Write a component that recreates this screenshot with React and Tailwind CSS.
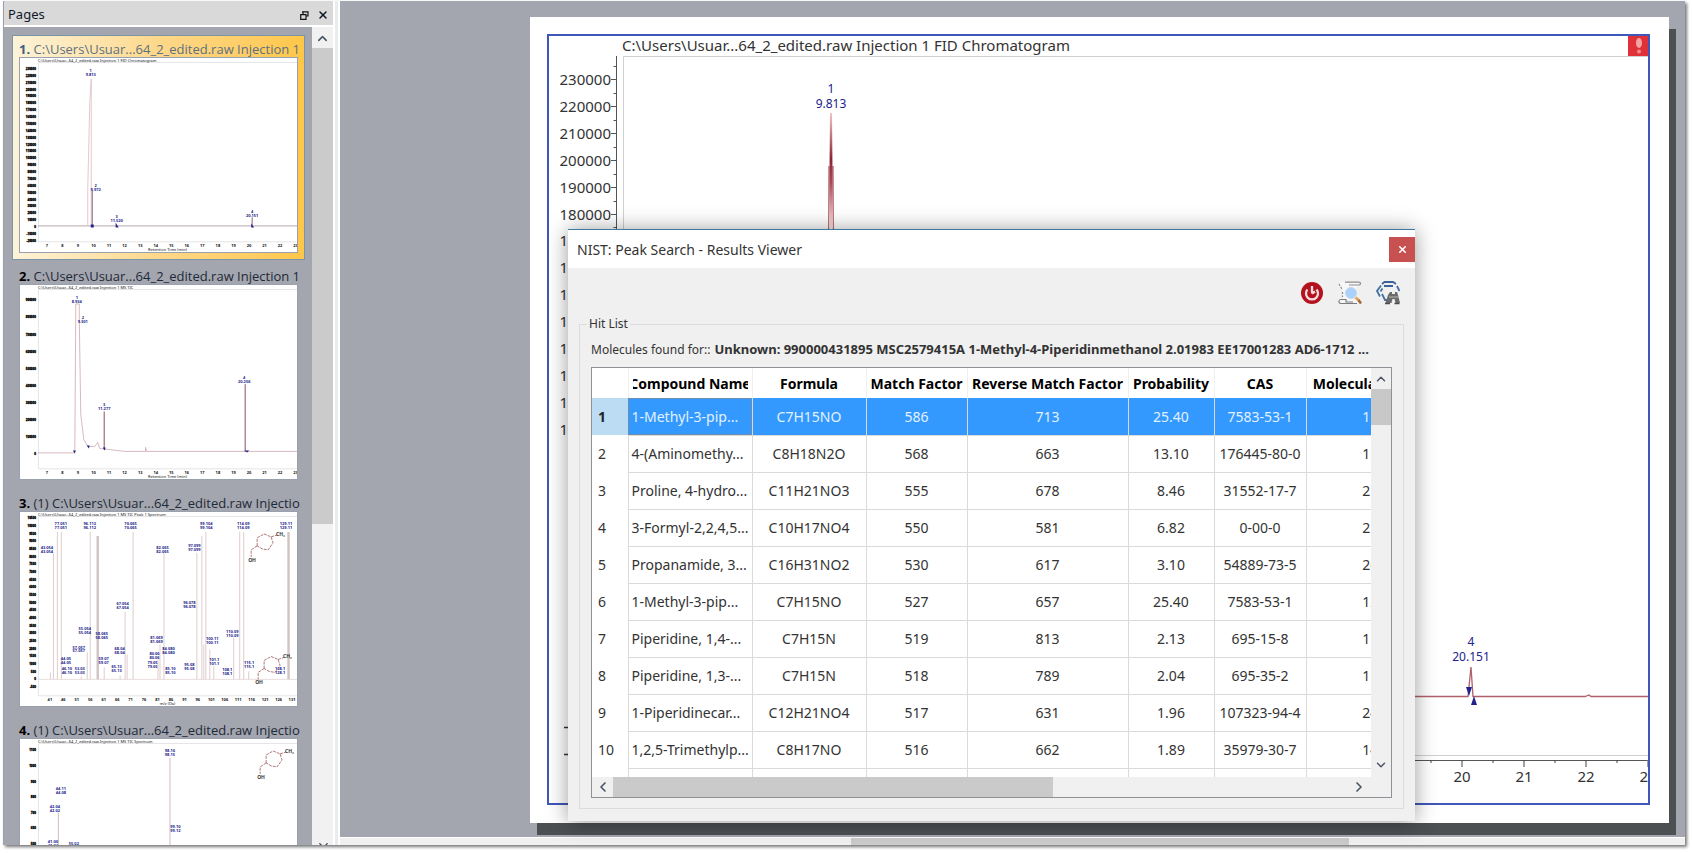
import { ChevronUp, ChevronDown, ChevronLeft, ChevronRight, X } from 'lucide-react'

const hits = [
  ['1-Methyl-3-pip...', 'C7H15NO', 586, 713, '25.40', '7583-53-1', 129],
  ['4-(Aminomethy...', 'C8H18N2O', 568, 663, '13.10', '176445-80-0', 158],
  ['Proline, 4-hydro...', 'C11H21NO3', 555, 678, '8.46', '31552-17-7', 215],
  ['3-Formyl-2,2,4,5...', 'C10H17NO4', 550, 581, '6.82', '0-00-0', 215],
  ['Propanamide, 3...', 'C16H31NO2', 530, 617, '3.10', '54889-73-5', 269],
  ['1-Methyl-3-pip...', 'C7H15NO', 527, 657, '25.40', '7583-53-1', 129],
  ['Piperidine, 1,4-...', 'C7H15N', 519, 813, '2.13', '695-15-8', 113],
  ['Piperidine, 1,3-...', 'C7H15N', 518, 789, '2.04', '695-35-2', 113],
  ['1-Piperidinecar...', 'C12H21NO4', 517, 631, '1.96', '107323-94-4', 243],
  ['1,2,5-Trimethylp...', 'C8H17NO', 516, 662, '1.89', '35979-30-7', 143],
]

const columns = ['Compound Name', 'Formula', 'Match Factor', 'Reverse Match Factor', 'Probability', 'CAS', 'Molecular Weight']

const range = (n) => Array.from({ length: n }, (_, i) => i)

// two stacked label lines above a peak
function PeakTag({ x, y, top, bottom }) {
  return (
    <g fill="#22228c" fontSize="4" fontWeight="bold" textAnchor="middle">
      <text x={x} y={y}>{top}</text>
      <text x={x} y={y + 4}>{bottom}</text>
    </g>
  )
}

function Thumb({ title, yLabels, yStart, yStep, xLabels, xStart, xStep, xTitle, children }) {
  return (
    <svg viewBox="0 0 278 195" className="block w-full border border-gray-400 bg-white" fontFamily="Noto Sans, sans-serif">
      <path d="M18.5 5V184.5H278M18.5 4.5H278" fill="none" stroke="#d4d4d8" strokeWidth="0.6" />
      <text x="18" y="4" fontSize="4" fill="#111">{title}</text>
      <g fontSize="3" fontWeight="bold" fill="#000" stroke="#000" strokeWidth="0.3" textAnchor="end">
        {yLabels.map((v, i) => (
          <text key={v} x="16" y={yStart + i * yStep + 1}>{v}</text>
        ))}
      </g>
      <g fontSize="4" fontWeight="bold" fill="#111" textAnchor="middle">
        {xLabels.map((v, i) => (
          <text key={v} x={xStart + i * xStep} y="190">{v}</text>
        ))}
        <text x="148" y="194" fontWeight="normal">{xTitle}</text>
      </g>
      {children}
    </svg>
  )
}

function Molecule({ x, y }) {
  return (
    <g transform={`translate(${x} ${y})`} fill="none" stroke="#9a5555" strokeWidth="0.8">
      <path d="M-8 4V-4L-1 -8L6 -5L8 1L3 8L-3 7ZM-8 4L-14 8V15M6 -5L12 -7" strokeDasharray="3 1" />
      <g fill="#333" stroke="none" fontSize="5" fontWeight="bold">
        <text x="11" y="-6">CH₃</text>
        <text x="-17" y="20">OH</text>
      </g>
    </g>
  )
}

const retention = range(17).map((i) => i + 7)

function ThumbFid() {
  return (
    <Thumb
      title="C:\Users\Usuar...64_2_edited.raw Injection 1 FID Chromatogram"
      yLabels={range(26).map((i) => 230000 - i * 10000)} yStart={11} yStep={6.9}
      xLabels={retention} xStart={27} xStep={15.6} xTitle="Retention Time (min)"
    >
      <path d="M18 168.5H278" stroke="#a89098" strokeWidth="0.8" />
      <path d="M68 168V132L70 45L71.5 21V168" fill="none" stroke="#dcc4c4" strokeWidth="0.9" />
      <path d="M72.5 133V168M233 160V168" stroke="#8a6070" strokeWidth="1" />
      <path d="M71 167h3v3h-3zM96 165l3 5h-3zM232 166l3 4h-3z" fill="#22228c" />
      <PeakTag x={71} y={14} top="1" bottom="9.813" />
      <PeakTag x={76} y={129} top="2" bottom="9.972" />
      <PeakTag x={97} y={161} top="3" bottom="11.520" />
      <PeakTag x={233} y={156} top="4" bottom="20.151" />
    </Thumb>
  )
}

function ThumbTic() {
  return (
    <Thumb
      title="C:\Users\Usuar...64_2_edited.raw Injection 1 MS TIC"
      yLabels={range(10).map((i) => 900000 - i * 100000)} yStart={15.5} yStep={17.1}
      xLabels={retention} xStart={27} xStep={15.6} xTitle="Retention Time (min)"
    >
      <path
        d="M18 168.5H55L56 19H59.5V35L61 130L64 155L68 162L75 162L78 158L80 164L105 167L126 167V163L127 167H278"
        fill="none" stroke="#c79aa2" strokeWidth="0.7"
      />
      <path d="M84.5 127V165M226 99.5V167" stroke="#8a5058" strokeWidth="1" />
      <path d="M53 166h3l-1 3zM67 161h3l-1 3zM83 163h3l-1 3zM225 166h5l-2 2z" fill="#22228c" />
      <PeakTag x={57} y={14} top="1" bottom="8.934" />
      <PeakTag x={63} y={34} top="2" bottom="9.301" />
      <PeakTag x={84.5} y={121} top="3" bottom="11.277" />
      <PeakTag x={225} y={94} top="4" bottom="20.256" />
    </Thumb>
  )
}

// [x, top] of every mass line
const massLines = [
  [37, 20], [41, 20], [70, 20], [113, 20], [186, 20], [220, 20], [224, 20], [105, 100], [67, 141], [107, 143],
  [144, 41], [140, 133], [177, 41], [182, 24], [184, 133], [190, 138], [194, 155], [214, 126], [33, 41], [30, 161],
  [84, 156], [229, 160], [61, 165], [138, 148], [100, 164],
]
const massTags = [
  [41, 13, '77.051'], [70, 13, '96.112'], [111, 13, '70.065'], [187, 13, '99.104'], [224, 13, '114.09'], [267, 13, '129.11'],
  [27, 37, '43.054'], [143, 37, '82.065'], [175, 35, '97.099'], [103, 93, '67.054'], [170, 92, '96.078'], [65, 118, '55.054'],
  [82, 123, '58.065'], [59, 137, '57.057'], [46, 149, '44.05'], [47, 159, '46.10'], [60, 159, '53.03'], [84, 149, '59.07'],
  [97, 157, '65.13'], [100, 139, '68.04'], [137, 127, '81.069'], [149, 139, '84.080'], [135, 144, '80.06'], [133, 153, '79.05'],
  [151, 159, '85.10'], [170, 155, '95.08'], [193, 128, '100.11'], [195, 150, '101.1'], [213, 121, '110.09'],
  [208, 160, '108.1'], [230, 153, '115.1'], [261, 159, '128.1'],
]

function ThumbMass() {
  return (
    <Thumb
      title="C:\Users\Usuar...64_2_edited.raw Injection 1 MS TIC Peak 1 Spectrum"
      yLabels={range(23).map((i) => 10500 - i * 500)} yStart={6.3} yStep={7.7}
      xLabels={range(19).map((i) => 41 + i * 5)} xStart={30} xStep={13.5} xTitle="m/z (Da)"
    >
      {massLines.map(([x, y]) => (
        <path key={x + '-' + y} d={`M${x}.5 ${y}V168`} stroke="#e0cccc" strokeWidth="1" />
      ))}
      <path d="M78 24V168M269.5 20V168" stroke="#d2c2c2" strokeWidth="2.4" />
      <path d="M18 168H278" stroke="#e4d4d4" strokeWidth="0.8" />
      {massTags.map(([x, y, t]) => (
        <PeakTag key={t} x={x} y={y} top={t} bottom={t} />
      ))}
      <Molecule x={246} y={30} />
      <Molecule x={253} y={153} />
    </Thumb>
  )
}

function ThumbMass2() {
  return (
    <Thumb
      title="C:\Users\Usuar...64_2_edited.raw Injection 1 MS TIC Spectrum"
      yLabels={range(12).map((i) => 1100 - i * 100)} yStart={11.3} yStep={15.7}
      xLabels={range(19).map((i) => 41 + i * 5)} xStart={30} xStep={13.5} xTitle="m/z (Da)"
    >
      <path d="M150.5 19V168M38.5 74V168" stroke="#d4baba" strokeWidth="1" />
      <PeakTag x={150.5} y={13} top="98.10" bottom="98.15" />
      <PeakTag x={41} y={51} top="44.11" bottom="44.08" />
      <PeakTag x={35} y={69} top="42.04" bottom="42.02" />
      <PeakTag x={156} y={89} top="99.10" bottom="99.12" />
      <PeakTag x={33} y={104} top="41.00" bottom="41.04" />
      <PeakTag x={54} y={106} top="55.02" bottom="55.08" />
      <Molecule x={255} y={20} />
    </Thumb>
  )
}

const pages = [
  { no: '1.', name: 'C:\\Users\\Usuar...64_2_edited.raw Injection 1', Picture: ThumbFid },
  { no: '2.', name: 'C:\\Users\\Usuar...64_2_edited.raw Injection 1', Picture: ThumbTic },
  { no: '3.', name: '(1) C:\\Users\\Usuar...64_2_edited.raw Injectio', Picture: ThumbMass },
  { no: '4.', name: '(1) C:\\Users\\Usuar...64_2_edited.raw Injectio', Picture: ThumbMass2 },
]

function PagesPanel() {
  return (
    <aside className="flex w-[330px] shrink-0 flex-col border-l border-gray-400">
      <header className="flex h-[26px] shrink-0 items-center gap-2 border-b-2 border-white bg-[#d9d9d9] px-1 pt-1 text-[13px] text-gray-900">
        <h2 className="flex-1">Pages</h2>
        <button type="button" aria-label="Float panel">
          <svg width="9" height="9" viewBox="0 0 9 9" fill="none" stroke="#111" strokeWidth="1.2">
            <path d="M3 3V1H8V5H6M2 0.8H8.5M0.7 3.6H6V8.3H0.7Z" />
          </svg>
        </button>
        <button type="button" aria-label="Close panel"><X size={12} strokeWidth={3} /></button>
      </header>
      <div className="flex min-h-0 flex-1 overflow-hidden">
        <div className="flex min-w-0 flex-1 flex-col gap-1 bg-[#a3a6ae] pt-[9px] pr-2 pl-[9px]">
          {pages.map(({ no, name, Picture }, i) => (
            <div
              key={no}
              className={`h-[223px] shrink-0 px-1.5 ${i === 0 ? 'bg-linear-to-r from-[#fdf3d8] via-[#fdd88a] to-[#fec748] text-[#5e7080] outline outline-[#7b94a8]' : 'text-gray-800'}`}
            >
              <div className="h-[21px] pt-1 font-['Open_Sans',sans-serif] text-[13px] leading-[18px] whitespace-nowrap">
                <b className={i === 0 ? 'text-[#3f6080]' : 'text-black'}>{no}</b> {name}
              </div>
              <Picture />
            </div>
          ))}
        </div>
        <div className="relative w-[21px] shrink-0 overflow-hidden bg-[#f1f1f1] pt-px">
          <div className="flex h-5 items-center justify-center text-gray-600"><ChevronUp size={15} strokeWidth={2.5} /></div>
          <div className="h-[476px] bg-[#cbcbcb]" />
          <ChevronDown size={15} className="absolute -bottom-2 left-1 text-gray-700" />
        </div>
      </div>
    </aside>
  )
}

function Chromatogram() {
  return (
    <svg className="block h-full w-full" fontFamily="Noto Sans, sans-serif" fill="#333">
      <defs>
        <linearGradient id="apex" x1="0" y1="0" x2="0" y2="1">
          <stop offset="0" stopColor="#f3c6c6" />
          <stop offset="0.4" stopColor="#8c2434" />
          <stop offset="0.6" stopColor="#a84a56" />
          <stop offset="1" stopColor="#fbe3e3" />
        </linearGradient>
      </defs>
      <text x="73" y="15" fontSize="15">C:\Users\Usuar...64_2_edited.raw Injection 1 FID Chromatogram</text>
      <path d="M74.5 719V20.5H1099M74 719.5H1099" fill="none" stroke="#d0d0d0" />
      <path d="M67.5 20V724.5H1098.5" fill="none" stroke="#555" />
      {range(26).map((i) => {
        const y = Math.round(43 + i * 26.9) + 0.5
        return (
          <g key={i}>
            <path d={`M62 ${y}h5M64.5 ${y - 13}h3`} stroke="#555" />
            {i < 14 && <text x="62" y={y + 5} fontSize="15" textAnchor="end">{230000 - i * 10000}</text>}
          </g>
        )
      })}
      {/* minus signs of the two negative labels */}
      <path d="M15 691.5h5M15 718.5h5" stroke="#333" strokeWidth="1.3" />
      {[20, 21, 22, 23].map((n, i) => (
        <g key={n}>
          <path d={`M${913 + i * 62} 724v7M${882 + i * 62} 724v3`} stroke="#444" />
          <text x={913 + i * 62} y="746" fontSize="15" textAnchor="middle">{n}</text>
        </g>
      ))}

      {/* signal */}
      <path d="M74 660.5H278L280 130M284 130L286 660.5H919L922 631L924 660.5H1036L1040 659L1042 660.5H1099" fill="none" stroke="#b0606a" strokeWidth="1.3" />
      <path d="M280 192L281 77H283L284 192Z" fill="url(#apex)" />
      <g fill="#22228c" fontSize="12" textAnchor="middle">
        <text x="282" y="57">1</text>
        <text x="282" y="72">9.813</text>
        <text x="922" y="610">4</text>
        <text x="922" y="625">20.151</text>
        <path d="M917 651h6l-3 9zM922 669h6l-3 -9z" />
      </g>
    </svg>
  )
}

function Toolbar() {
  return (
    <div className="flex items-center justify-end gap-[14px] pt-[13px] pr-[15px]">
      <button type="button" aria-label="Stop search">
        <svg width="24" height="24" viewBox="0 0 24 24" fill="none">
          <circle cx="12" cy="12" r="11" fill="#b4121f" />
          <path d="M7.5 8.5A6 6 0 1 0 16.5 8.5" stroke="#f4dede" strokeWidth="2.3" />
          <path d="M12 5V12.5M12 12.5L15 10.5" stroke="#f4dede" strokeWidth="2.3" />
        </svg>
      </button>
      <button type="button" aria-label="View report">
        <svg width="24" height="24" viewBox="0 0 24 24" fill="none">
          <path d="M2 1H21L22 4H19L18 20L20 23H2L1 20L5 18V8Z" fill="#f7f7f7" />
          <path d="M7 1.2H21C23 1.2 23 4 21 4H11" stroke="#8d8d8d" strokeWidth="1.2" />
          <path d="M1 3L4.5 9M4.5 11V16" stroke="#8d8d8d" strokeDasharray="2 1.5" strokeWidth="1.2" />
          <path d="M19 22.5H3C0 22.5 0.5 18.5 3 18.5H8V21H15" stroke="#7b7b7b" strokeWidth="1.2" />
          <circle cx="13" cy="12" r="5.5" fill="#a9d1fb" stroke="#c3d7ee" />
          <path d="M17.5 16.5L21 19.5" stroke="#dca35c" strokeWidth="2.8" />
          <path d="M20.5 19L23 22.5" stroke="#a5683a" strokeWidth="2.6" />
        </svg>
      </button>
      <button type="button" aria-label="Find molecule">
        <svg width="24" height="24" viewBox="0 0 24 24" fill="none">
          <path d="M6 3L8.5 1H17L20 3M8 5H17" stroke="#3b639b" strokeWidth="1.8" />
          <path d="M5 4.5L1 10L4 15.5M6.5 7.5L4.5 10.5M21 5L23.5 10M6 13L9 19H11" stroke="#4270a5" strokeWidth="1.8" />
          <path d="M12 14l2-3h2v2h3v-2h2l1 3 2 8h-4.500l-1-4h-2l-1 4H9.500z" fill="#6b6b6b" />
          <path d="M9 22.500h5M18.500 22.500h5" stroke="#4c4c4c" strokeWidth="1.500" />
          <path d="M13 16h9" stroke="#b9b9b9" />
        </svg>
      </button>
    </div>
  )
}

function HitTable() {
  return (
    <div className="border border-[#8e9196] bg-white">
      <div className="flex h-[409px]">
        <div className="min-w-0 flex-1 overflow-hidden">
          <table className="w-[850px] table-fixed border-collapse text-center text-[14px] text-[#333]">
            <colgroup>
              <col className="w-[36px]" />
              <col className="w-[124px]" />
              <col className="w-[114px]" />
              <col className="w-[101px]" />
              <col className="w-[161px]" />
              <col className="w-[86px]" />
              <col className="w-[92px]" />
              <col className="w-[136px]" />
            </colgroup>
            <thead>
              <tr className="h-[30px] text-black">
                <th />
                {columns.map((c) => (
                  <th key={c} className="border-l border-[#f0f0f0] px-1">
                    <div className="flex justify-center overflow-hidden whitespace-nowrap">{c}</div>
                  </th>
                ))}
              </tr>
            </thead>
            <tbody>
              {hits.map((row, i) => (
                <tr key={i} className={`h-[37px] ${i === 0 ? 'bg-[#3399ff] text-[#e2f1ff]' : ''}`}>
                  <th className={`pl-1.5 text-left ${i === 0 ? 'bg-[#bcdcf4] text-[#222]' : 'font-normal'}`}>{i + 1}</th>
                  {row.map((v, j) => (
                    <td
                      key={j}
                      className={`overflow-hidden border-b border-l border-[#dadada] whitespace-nowrap ${j === 0 ? 'pl-[3px] text-left' : ''} ${i === 0 && j === 0 ? 'outline -outline-offset-1 outline-[#6d8db0]' : ''}`}
                    >
                      {v}
                    </td>
                  ))}
                </tr>
              ))}
              <tr className="h-[37px]">
                <th />
                {columns.map((c) => <td key={c} className="border-l border-[#dadada]" />)}
              </tr>
            </tbody>
          </table>
        </div>
        <div className="flex w-5 shrink-0 flex-col bg-[#f0f0f0] text-gray-600">
          <div className="flex h-[21px] items-center justify-center"><ChevronUp size={14} strokeWidth={2.5} /></div>
          <div className="h-9 bg-[#c8c8c8]" />
          <div className="mt-auto flex h-6 items-center justify-center"><ChevronDown size={14} strokeWidth={2.5} /></div>
        </div>
      </div>
      <div className="flex h-5 items-center bg-[#f0f0f0] pr-5 text-gray-600">
        <div className="flex w-[21px] justify-center"><ChevronLeft size={16} strokeWidth={2.5} /></div>
        <div className="flex h-full flex-1"><div className="h-full w-[60%] bg-[#cacaca]" /></div>
        <div className="flex w-6 justify-center"><ChevronRight size={16} strokeWidth={2.5} /></div>
      </div>
    </div>
  )
}

function ResultsDialog() {
  return (
    <section
      role="dialog"
      aria-label="NIST: Peak Search - Results Viewer"
      className="absolute top-[228px] right-[270px] left-[228px] border-t border-[#3b7ba0] bg-[#f0f0f0] pb-3 shadow-[0_1px_20px_rgba(0,0,0,0.4)]"
    >
      <header className="flex h-[38px] items-center justify-between bg-white pl-[9px]">
        <h1 className="text-[14px] text-[#333]">NIST: Peak Search - Results Viewer</h1>
        <button type="button" aria-label="Close" className="flex h-[25px] w-[26px] items-center justify-center bg-[#c75050] text-white">
          <X size={11} strokeWidth={3.5} />
        </button>
      </header>
      <Toolbar />
      <fieldset className="mx-[11px] mt-2.5 min-w-0 border border-[#dcdcdc] px-[11px] pb-2.5">
        <legend className="-ml-1 px-0.5 text-[12px] text-[#333]">Hit List</legend>
        <p className="flex h-[34px] items-center gap-1 overflow-hidden text-[12px] whitespace-nowrap text-[#333]">
          Molecules found for:: <b className="text-[13px]">Unknown: 990000431895 MSC2579415A 1-Methyl-4-Piperidinmethanol 2.01983 EE17001283 AD6-1712 ...</b>
        </p>
        <HitTable />
      </fieldset>
    </section>
  )
}

export default function App() {
  return (
    <div className="h-screen overflow-hidden bg-white pt-px pr-[7px] pb-2 pl-[3px] font-['Noto_Sans',sans-serif]">
      <div className="flex h-full shadow-[2px_2px_3px_#777]">
        <PagesPanel />
        <div className="w-[7px] shrink-0 border-x-2 border-white bg-[#e9ebec]" />
        <main className="relative flex min-w-0 flex-1 flex-col bg-[#a3a6ae]">
          <div className="min-h-0 flex-1 pt-4 pr-4 pb-[14px] pl-[190px]">
            <div className="h-full bg-white pt-[17px] pr-[19px] pb-[18px] pl-[17px] shadow-[7px_12px_0_#4c5052]">
              <div className="relative h-full overflow-hidden border-2 border-[#3f57b8]">
                <Chromatogram />
                <svg className="absolute top-0 right-0" width="20" height="20" viewBox="0 0 20 20">
                  <path d="M0 0h20v20H0z" fill="#e03038" />
                  <ellipse cx="11" cy="7" rx="3" ry="5" fill="#f5a3a3" />
                  <circle cx="11" cy="15.5" r="2" fill="#f58c8c" />
                </svg>
              </div>
            </div>
          </div>
          <div className="relative flex h-2 shrink-0 overflow-hidden border-t border-white bg-[#f0f0f0]">
            <ChevronLeft size={14} className="absolute top-1 left-1 text-gray-700" />
            <div className="ml-[38%] h-full w-[37%] bg-[#cbcbcb]" />
          </div>
          <ResultsDialog />
        </main>
      </div>
    </div>
  )
}
